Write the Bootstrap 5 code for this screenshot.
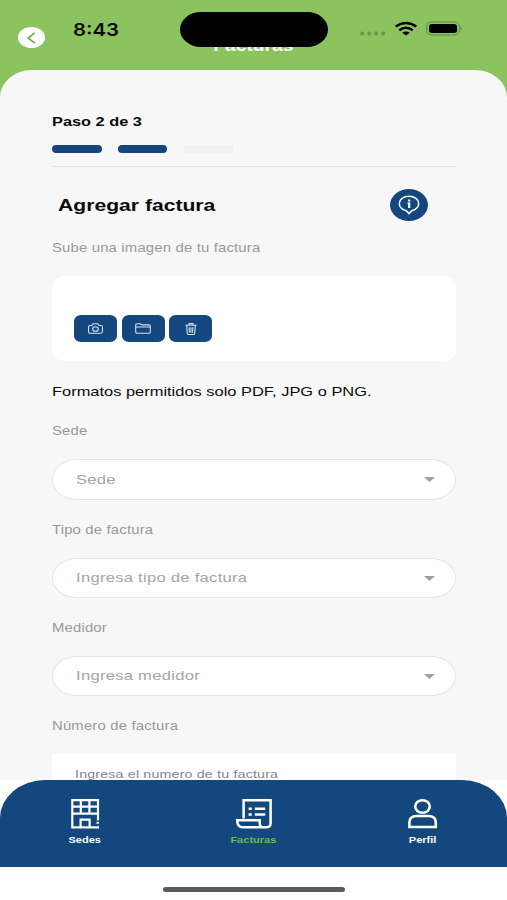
<!DOCTYPE html>
<html lang="es">
<head>
<meta charset="utf-8">
<meta name="viewport" content="width=device-width, initial-scale=1">
<title>Facturas</title>
<link href="https://cdn.jsdelivr.net/npm/bootstrap@5.3.0/dist/css/bootstrap.min.css" rel="stylesheet">
<style>
:root{--green:#8bc35f;--navy:#13477e}
body{font-family:"Liberation Sans",Arial,sans-serif;background:#fff;color:#0b0b0b}
.screen{width:507px;height:900px;background:var(--green)}
.topbar{height:70px;flex:none}
.wide{display:inline-block;white-space:nowrap;transform:scaleX(var(--sx,1.2));transform-origin:left center}
.wide-mid{transform-origin:center}
svg{display:block;flex:none}
.back{width:27px;height:21px;border-radius:50%;margin:27px 0 0 18px}
.clock{font:600 17.5px/20px Inter,sans-serif;--sx:1.16;margin:20px 0 0 27.5px}
.island{left:180px;top:12px;width:148px;height:35px;border-radius:21px/17.5px;background:#000;z-index:2}
.page-title{left:0;right:0;top:36px;font-size:16px;line-height:20px;z-index:1}
.status{right:44px;top:20px;height:18px}
.sheet{height:710px;flex:none;background:#f7f7f7;border-radius:32px 32px 0 0/27px 27px 0 0;padding:44px 51px 0 52px}
.step-text{font-size:13.5px;line-height:16px;height:16px;--sx:1.21}
.steps{margin-top:14.5px;gap:16.3px}
.step-bar{width:49.6px;height:8px;border-radius:4px;background:var(--navy)}
.step-bar.off{background:#f1f1f1;border-radius:1px}
.rule{margin-top:13px;height:1.6px;background:#e2e2e2}
.head-row{margin-top:21.9px;height:32px;padding:0 28px 0 6px}
.heading{font-size:17.4px;line-height:22px;--sx:1.215}
.info{width:38px;height:32px;border-radius:50%;background:var(--navy)}
.lbl{font-size:12.6px;line-height:16px;height:16px;color:#999;letter-spacing:.15px;--sx:1.18;position:relative;top:1px}
.upload{margin-top:21.3px;height:85px;border-radius:12px/10px;padding:39px 0 0 22px;gap:4.5px}
.tool{width:43px;height:26.5px;border-radius:7px/6px;background:var(--navy)}
.formats{margin-top:22.4px;font-size:13.5px;line-height:16px;height:16px;--sx:1.217}
.pick{margin-top:21px;height:40.4px;border:1.3px solid #e4e4e4;border-radius:25px/20.2px;padding:1px 20.5px 0 22.8px;color:#a5a5a5;font-size:13.6px;letter-spacing:.22px;--sx:1.221}
.invoice-no{margin-top:21px;height:60px;padding:12px 0 0 23px;font-size:11.8px;letter-spacing:.15px;line-height:16px;color:#858585;--sx:1.205}
.bottom{height:120px;flex:none;background:#fff}
.tabs{height:87px;background:var(--navy);border-radius:45px 45px 0 0/38px 38px 0 0;padding-top:18px}
.tab{flex:1;color:#fff;font-size:9.3px;line-height:12px;--sx:1.187}
.tab .wide{margin-top:5px}
.tab.on .wide{color:#6abd45}
.home{width:182px;height:5px;border-radius:3px;background:#5c5c5c;margin:20.4px auto 0}
</style>
<script src="https://cdn.jsdelivr.net/npm/bootstrap@5.3.0/dist/js/bootstrap.bundle.min.js"></script>
</head>
<body>
<div class="screen d-flex flex-column overflow-hidden">
  <header class="topbar position-relative d-flex align-items-start">
    <a class="back bg-white d-flex align-items-center justify-content-center" href="#" aria-label="Volver">
      <svg width="9" height="12" viewBox="0 0 9 12" fill="none" stroke="#76b14a" stroke-width="1.7"><path d="M7.8.8 1.2 6l6.6 5.2"/></svg>
    </a>
    <span class="clock wide">8:43</span>
    <div class="page-title position-absolute text-center text-white fw-bold"><span class="wide wide-mid">Facturas</span></div>
    <div class="island position-absolute"></div>
    <div class="status position-absolute d-flex">
      <svg width="103" height="18" viewBox="0 0 103 18">
        <g fill="#68964a"><circle cx="2.2" cy="13.4" r="2"/><circle cx="9.2" cy="13.4" r="2"/><circle cx="16.2" cy="13.4" r="2"/><circle cx="23.2" cy="13.4" r="2"/></g>
        <g fill="none" stroke="#000" stroke-width="2.5"><path d="M35.7 6.5q10.3-7.2 20.6 0"/><path d="M39.3 10.2q6.700-4.900 13.400 0"/></g>
        <path d="M42.300 12.800q3.700-2.600 7.400 0L46 15.500z"/>
        <rect x="66.700" y="2" width="32.600" height="13" rx="4.600" ry="4" fill="none" stroke="#5f8a42"/>
        <rect x="69" y="4" width="28" height="9" rx="3" ry="2.500"/>
        <path d="M100.700 6.500q2.600 2 0 4z" fill="#5f8a42"/>
      </svg>
    </div>
  </header>

  <main class="sheet overflow-hidden">
    <div class="step-text fw-bold"><span class="wide">Paso 2 de 3</span></div>
    <div class="steps d-flex"><div class="step-bar"></div><div class="step-bar"></div><div class="step-bar off"></div></div>
    <div class="rule"></div>
    <div class="head-row d-flex align-items-center justify-content-between">
      <h1 class="heading wide fw-bold m-0">Agregar factura</h1>
      <div class="info d-flex align-items-center justify-content-center">
        <svg width="22" height="20" viewBox="0 0 22 20" fill="none" stroke="#fff" stroke-width="1.5"><path d="M8.3 15.7C4 14.6 1.3 12 1.3 8.5 1.3 4.300 5.500 1.300 11 1.300S20.700 4.300 20.700 8.500c0 3.500-2.700 6.100-7 7.200L11 18.600z"/><path d="M9.300 8H11.300V12.700" stroke-width="1.100"/><path d="M11.200 7.700v5.200M11.200 4.600v1.800" stroke-width="2.100"/></svg>
      </div>
    </div>
    <div class="lbl" style="margin-top:18px"><span class="wide">Sube una imagen de tu factura</span></div>
    <div class="upload bg-white d-flex align-items-start">
      <button class="tool btn p-0 d-flex align-items-center justify-content-center" aria-label="Tomar foto">
        <svg width="15" height="11" viewBox="0 0 15 11" fill="none" stroke="#d3e2f3" stroke-width="1.100"><path d="M2 2.500h2L5.200.7h4.600L11 2.500h2q1.400 0 1.400 1.200v5q0 1.500-1.600 1.500H2.200Q.6 10.200.6 8.700v-5Q.6 2.500 2 2.500z"/><ellipse cx="7.500" cy="6" rx="2.800" ry="2.300"/></svg>
      </button>
      <button class="tool btn p-0 d-flex align-items-center justify-content-center" aria-label="Abrir carpeta">
        <svg width="16" height="11" viewBox="0 0 16 11" fill="none" stroke="#d3e2f3" stroke-width="1.100"><path d="M.7 9V2Q.7.7 2.200.7h3l1.600 1.200H14q1.300 0 1.300 1.200V9q0 1.300-1.500 1.300H2.200Q.7 10.300.7 9zM.7 4h14.600"/></svg>
      </button>
      <button class="tool btn p-0 d-flex align-items-center justify-content-center" aria-label="Eliminar">
        <svg width="12" height="12" viewBox="0 0 12 12" fill="none" stroke="#d3e2f3" stroke-width="1.100"><path d="M.4 2.300h11.200M4 2.200V.6h4v1.600M1.700 2.500l.6 8q.1 1 1.200 1h5q1.100 0 1.200-1l.6-8M4.200 4.200l.2 5.500M6 4.200v5.500M7.800 4.200l-.2 5.500"/></svg>
      </button>
    </div>
    <div class="formats"><span class="wide">Formatos permitidos solo PDF, JPG o PNG.</span></div>

    <div class="lbl" style="margin-top:22.500px"><span class="wide">Sede</span></div>
    <div class="pick bg-white d-flex align-items-center justify-content-between"><span class="wide">Sede</span><svg width="11" height="5" viewBox="0 0 11 5"><path d="M0 0h11L5.500 5z" fill="#a0a0a0"/></svg></div>
    <div class="lbl" style="margin-top:21px"><span class="wide">Tipo de factura</span></div>
    <div class="pick bg-white d-flex align-items-center justify-content-between"><span class="wide">Ingresa tipo de factura</span><svg width="11" height="5" viewBox="0 0 11 5"><path d="M0 0h11L5.500 5z" fill="#a0a0a0"/></svg></div>
    <div class="lbl" style="margin-top:21px"><span class="wide">Medidor</span></div>
    <div class="pick bg-white d-flex align-items-center justify-content-between"><span class="wide">Ingresa medidor</span><svg width="11" height="5" viewBox="0 0 11 5"><path d="M0 0h11L5.500 5z" fill="#a0a0a0"/></svg></div>
    <div class="lbl" style="margin-top:21px"><span class="wide">Número de factura</span></div>
    <div class="invoice-no bg-white"><span class="wide">Ingresa el numero de tu factura</span></div>
  </main>

  <footer class="bottom">
    <nav class="tabs d-flex">
      <div class="tab d-flex flex-column align-items-center fw-bold">
        <svg width="30" height="31" viewBox="0 0 30 31" fill="none" stroke="#fff" stroke-width="2.200"><path d="M28 22.500V2.200H2.300v27.200H29M2.300 8.700H28M2.300 15.700H28M10.800 2.200v13.500M19.400 2.200v13.500M10.600 29.400v-7.700h9v7.700"/><path d="M26.500 24.800H29" stroke-width="1.800"/></svg>
        <span class="wide wide-mid">Sedes</span>
      </div>
      <div class="tab on d-flex flex-column align-items-center fw-bold">
        <svg width="38" height="31" viewBox="0 0 38 31" fill="none" stroke="#fff" stroke-width="2.500"><path d="M8.600 20.500V2.300h27v23.200q0 3.800-4.600 3.800H7.700Q2.200 29.300 2.200 22.300h22.500v2.900q0 4.100 4.500 4.100"/><path d="M13.600 10.800h3.200M13.600 16.500h3.200M19.800 10.800h10.400M19.800 16.500h10.400" stroke-width="2.400"/></svg>
        <span class="wide wide-mid">Facturas</span>
      </div>
      <div class="tab d-flex flex-column align-items-center fw-bold">
        <svg width="30" height="31" viewBox="0 0 30 31" fill="none" stroke="#fff" stroke-width="2.600"><ellipse cx="14.500" cy="8.500" rx="7.300" ry="6.300"/><path d="M1.400 29v-4.500q0-6.500 7.500-6.500h11.400q7.500 0 7.500 6.500V29z"/></svg>
        <span class="wide wide-mid">Perfil</span>
      </div>
    </nav>
    <div class="home"></div>
  </footer>
</div>
</body>
</html>
